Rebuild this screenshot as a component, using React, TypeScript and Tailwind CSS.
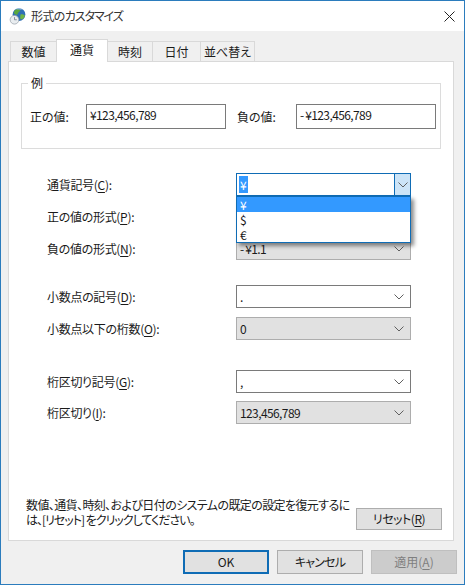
import React from "react";

const font = { fontFamily: '"Noto Sans CJK JP", "Liberation Sans", sans-serif' };

function Chevron({ color = "#606060" }: { color?: string }) {
  return (
    <svg width="10" height="6" viewBox="0 0 10 6" fill="none">
      <path d="M0.5 0.5 L5 5 L9.5 0.5" stroke={color} strokeWidth="1" />
    </svg>
  );
}

function U({ children }: { children: React.ReactNode }) {
  return <span className="underline underline-offset-2 decoration-1">{children}</span>;
}

function Combo({ value, disabled, cls = "" }: { value: string; disabled?: boolean; cls?: string }) {
  const neg = value.startsWith("-");
  return (
    <div
      className={`w-[175px] h-[23px] flex items-center justify-between pl-[3px] pr-[6px] border text-[12px] text-[#1a1a1a] ${
        disabled ? "bg-[#e1e1e1] border-[#adadad]" : "bg-white border-[#7a7a7a]"
      } ${cls}`}
    >
      <span className="tracking-[-0.6px]">
        {neg ? <span className="tracking-[1px]">-</span> : null}
        {neg ? value.slice(1) : value}
      </span>
      <Chevron />
    </div>
  );
}

function Row({ label, children, cls = "" }: { label: React.ReactNode; children: React.ReactNode; cls?: string }) {
  return (
    <div className={`flex items-center h-[23px] pl-[38px] ${cls}`}>
      <div className="w-[189px] text-[12px] text-[#1a1a1a] tracking-[-0.3px]">{label}</div>
      {children}
    </div>
  );
}

function Tab({ label, w, active }: { label: string; w: string; active?: boolean }) {
  return (
    <div
      className={`${w} flex items-center justify-center text-[12px] text-[#1a1a1a] border-t border-l border-r ${
        active
          ? "h-[23px] bg-white border-[#d9d9d9] -mb-px relative z-10 -mr-px pb-[2px]"
          : "h-[20px] bg-[#f0f0f0] border-[#d9d9d9] -mr-px"
      }`}
    >
      {label}
    </div>
  );
}

function Btn({ children, w = "w-[86px]", cls = "" }: { children: React.ReactNode; w?: string; cls?: string }) {
  return (
    <div className={`${w} flex items-center justify-center text-[12px] ${cls}`}>{children}</div>
  );
}

function Globe() {
  return (
    <svg width="17" height="18" viewBox="0 0 22 24">
      <circle cx="13" cy="10" r="8.5" fill="#2f6fb5" />
      <path d="M7 5 C10 2 13 3 15 4 C14 7 11 7 11 10 C8 11 7 9 6 8 Z" fill="#5aa83c" />
      <path d="M15 10 C18 9 20 10 21 12 C20 15 17 17 15 16 C14 14 15 12 15 10 Z" fill="#6fb544" />
      <path d="M9 3 C12 1 16 2 18 4 C15 3 12 3 9 3 Z" fill="#bcdcf2" />
      <circle cx="7" cy="17" r="5.8" fill="#e9edf0" stroke="#9aa3ab" strokeWidth="1" />
      <path d="M7 13.5 V17 H10" fill="none" stroke="#6b7680" strokeWidth="1" />
    </svg>
  );
}

export default function App() {
  return (
    <div
      style={font}
      className="w-[465px] h-[585px] flex flex-col bg-[#f0f0f0] border border-[#2b7cbd] text-[#1a1a1a] [font-feature-settings:'palt'] overflow-hidden"
    >
      <div className="h-[30px] bg-white flex items-center pl-[8px] pr-[9px] shrink-0">
        <Globe />
        <span className="ml-[5px] text-[12px] text-[#333]">
          <span className="tracking-[-0.6px]">形式の</span>
          <span className="tracking-[-1.1px]">カスタマイズ</span>
        </span>
        <svg className="ml-auto" width="11" height="11" viewBox="0 0 11 11">
          <path d="M0.5 0.5 L10.5 10.5 M10.5 0.5 L0.5 10.5" stroke="#222" strokeWidth="1" />
        </svg>
      </div>

      <div className="flex items-end h-[30px] pl-[9px] shrink-0">
        <Tab label="数値" w="w-[47px]" />
        <Tab label="通貨" w="w-[52px]" active />
        <Tab label="時刻" w="w-[46px]" />
        <Tab label="日付" w="w-[49px]" />
        <Tab label="並べ替え" w="w-[55px]" />
      </div>

      <div className="relative mx-[7px] h-[480px] w-[446px] bg-white border border-[#d9d9d9] flex flex-col shrink-0">
        <div className="relative mt-[21px] mx-[12px] h-[66px] border border-[#dcdcdc] flex items-center pl-[8px] pt-[1px]">
          <span className="absolute left-[6px] -top-[9px] bg-white px-[3px] text-[12px] leading-[16px]">例</span>
          <span className="w-[56px] text-[12px]">正の値:</span>
          <div className="w-[140px] h-[25px] border border-[#7a7a7a] pl-[3px] text-[12px] leading-[20px] tracking-[-0.6px]">¥123,456,789</div>
          <span className="ml-[11px] w-[59px] text-[12px]">負の値:</span>
          <div className="w-[140px] h-[25px] border border-[#7a7a7a] pl-[3px] text-[12px] leading-[20px] tracking-[-0.6px]">
            <span className="tracking-[1px]">-</span>¥123,456,789
          </div>
        </div>

        <div className="relative mt-[24px]">
          <Row label={<>通貨記号(<U>C</U>):</>}>
            <div className="w-[175px] h-[23px] flex border border-[#0f6cb5] bg-white">
              <div className="flex-1 flex items-center pl-[2px]">
                <span className="bg-[#3399ff] text-white text-[12px] leading-[17px] px-px">¥</span>
              </div>
              <div className="w-[16px] bg-[#cce4f7] border-l border-[#0f6cb5] flex items-center justify-center">
                <Chevron />
              </div>
            </div>
          </Row>
          <Row label={<>正の値の形式(<U>P</U>):</>} cls="mt-[9px]">
            <Combo value="" disabled />
          </Row>
          <Row label={<>負の値の形式(<U>N</U>):</>} cls="mt-[9px]">
            <Combo value="-¥1.1" disabled />
          </Row>
          <Row label={<>小数点の記号(<U>D</U>):</>} cls="mt-[25px]">
            <Combo value="." />
          </Row>
          <Row label={<>小数点以下の桁数(<U>O</U>):</>} cls="mt-[9px]">
            <Combo value="0" disabled />
          </Row>
          <Row label={<>桁区切り記号(<U>G</U>):</>} cls="mt-[30px]">
            <Combo value="," />
          </Row>
          <Row label={<>桁区切り(<U>I</U>):</>} cls="mt-[8px]">
            <Combo value="123,456,789" disabled />
          </Row>

          <div className="absolute left-[227px] top-[23px] w-[175px] h-[47px] bg-white border border-[#0f6cb5] shadow-[3px_3px_4px_rgba(0,0,0,0.45)] text-[12px] leading-[15px] z-20">
            <div className="bg-[#3399ff] text-white pl-[3px] h-[15px]">¥</div>
            <div className="pl-[3px] h-[15px]">$</div>
            <div className="pl-[3px] h-[15px]">€</div>
          </div>
        </div>

        <div className="mt-auto mb-[10px] flex items-end pl-[17px] pr-[11px]">
          <div className="text-[12px] leading-[15px] w-[330px] whitespace-nowrap mb-[3px]">
            <div className="tracking-[-0.6px]">数値、通貨、時刻、および日付のシステムの既定の設定を復元するに</div>
            <div className="tracking-[-1px]">は、[リセット] をクリックしてください。</div>
          </div>
          <Btn cls="h-[22px] bg-[#e1e1e1] border border-[#adadad]">
            <span className="tracking-[-0.5px]">リセット(<U>R</U>)</span>
          </Btn>
        </div>
      </div>

      <div className="flex justify-end gap-[8px] pr-[7px] pt-[9px]">
        <Btn cls="h-[24px] bg-[#e1e1e1] border-2 border-[#0f6cb5]">OK</Btn>
        <Btn cls="h-[24px] bg-[#e1e1e1] border border-[#adadad]">
          <span className="tracking-[-0.8px]">キャンセル</span>
        </Btn>
        <Btn cls="h-[24px] bg-[#cccccc] border border-[#bfbfbf] text-[#7f7f7f]">
          <span>適用(<U>A</U>)</span>
        </Btn>
      </div>
    </div>
  );
}
